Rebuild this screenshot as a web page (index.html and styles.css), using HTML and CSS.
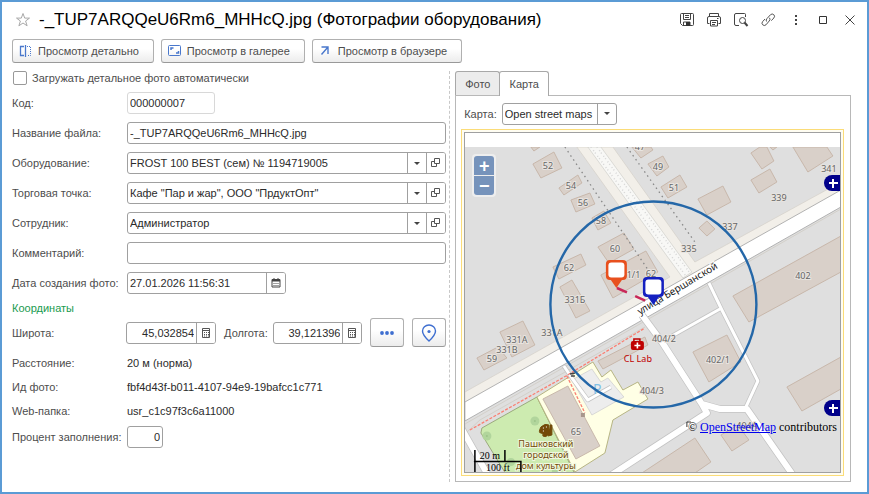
FILE: index.html
```html
<!DOCTYPE html>
<html lang="ru">
<head>
<meta charset="utf-8">
<title>Фотографии оборудования</title>
<link rel="stylesheet" href="styles.css">
</head>
<body>
<div class="window">
  <header class="titlebar">
    <button class="icon-btn star" aria-label="В избранное"><svg width="16" height="16" viewBox="0 0 16 16"><path d="M8 1.500l1.700 4.600h4.800l-3.900 2.900 1.500 4.800L8 11l-4.100 2.800 1.500-4.800-3.900-2.900h4.800z" fill="none" stroke="#a8a8a8"/></svg></button>
    <h1>-_TUP7ARQQeU6Rm6_MHHcQ.jpg (Фотографии оборудования)</h1>
    <div class="tools">
      <button class="icon-btn" aria-label="Сохранить"><svg width="16" height="16" viewBox="0 0 16 16"><path d="M.5 2.500q0-1 1-1h11q1 0 1 1v10q0 1-1 1H2.500l-2-2z" fill="none" stroke="#444"/><path d="M3.500 1.500v6h7v-6M5 3.500h4M5 5.500h4M3.500 13.500v-3.500h6.500v3.500" fill="none" stroke="#444"/><path d="M6 10h4v4H6z" fill="#333"/></svg></button>
      <button class="icon-btn" aria-label="Печать"><svg width="16" height="16" viewBox="0 0 16 16" fill="none" stroke="#444"><path d="M2.500 4.500v-3h9v3M2.500 11.500H.5v-5.500q0-1.500 1.500-1.500h10q1.500 0 1.500 1.500v5.500h-2M3.500 8.500h7v5.500h-7zM5 10.500h4M5 12.500h3M10 6.500h1.500"/></svg></button>
      <button class="icon-btn" aria-label="Просмотр"><svg width="16" height="16" viewBox="0 0 16 16" fill="none" stroke="#444"><path d="M5 13.500H2q-1.500 0-1.500-1.500V3q0-1.500 1.500-1.500h8.500q1 0 1 1V5"/><circle cx="8.500" cy="8.500" r="3"/><path d="M10.500 10.500l3 3.500" stroke-width="2"/></svg></button>
      <button class="icon-btn" aria-label="Ссылка"><svg width="16" height="16" viewBox="0 0 16 16" fill="none" stroke="#555"><path d="M5.500 9.500q-1-1.500.5-3l3.500-3.800q1.700-1.500 3.300 0t0 3.300l-2.500 2.700M8.500 5.800q1.200 1.500-.3 3.200L5 12.800q-1.700 1.500-3.300 0t0-3.300l2.300-2.500"/></svg></button>
      <button class="icon-btn" aria-label="Ещё"><svg width="16" height="16" viewBox="0 0 16 16" fill="#444"><path d="M7 3h2v2H7zM7 7h2v2H7zM7 11h2v2H7z"/></svg></button>
      <button class="icon-btn" aria-label="Развернуть"><svg width="16" height="16" viewBox="0 0 16 16"><path d="M4.500 4.500h7v7h-7z" fill="none" stroke="#333"/></svg></button>
      <button class="icon-btn" aria-label="Закрыть"><svg width="16" height="16" viewBox="0 0 16 16"><path d="M3.500 3.500l9 9M12.500 3.500l-9 9" stroke="#444"/></svg></button>
    </div>
  </header>

  <nav class="commands">
    <button class="btn"><svg width="14" height="14" viewBox="0 0 14 14" fill="none" stroke="#4a78cc"><path d="M5 2.500H1.500v9H5M6.500 1v12" stroke-width="1.300"/><path d="M8 2.500h3.500v9H8" stroke-dasharray="1 1"/></svg>Просмотр детально</button>
    <button class="btn"><svg width="14" height="14" viewBox="0 0 14 14" fill="none" stroke="#4a78cc"><rect x=".5" y="1.500" width="12" height="10" rx="1"/><path d="M3 6V4h2.500M10.500 7v2H8" stroke-width="1.500"/></svg>Просмотр в галерее</button>
    <button class="btn"><svg width="14" height="14" viewBox="0 0 14 14" fill="none" stroke="#4a78cc" stroke-width="1.400"><path d="M2.500 3H9v7M9 3l-6.500 7.500"/></svg>Просмотр в браузере</button>
  </nav>

  <main class="body">
    <form class="form">
      <label class="check"><input type="checkbox">Загружать детальное фото автоматически</label>

      <div class="rows">
        <label for="code">Код:</label>
        <div class="field code"><input id="code" value="000000007" readonly></div>

        <label for="name">Название файла:</label>
        <div class="field"><input id="name" value="-_TUP7ARQQeU6Rm6_MHHcQ.jpg"></div>

        <label for="equip">Оборудование:</label>
        <div class="field"><input id="equip" value="FROST 100 BEST (сем) № 1194719005"><button type="button" aria-label="Выбрать"><i class="caret"></i></button><button type="button" aria-label="Открыть"><svg width="10" height="10" viewBox="0 0 10 10" fill="none" stroke="#555"><path d="M3.500.5h5v5h-5zM3.500 3.500h-3v5h5v-3"/></svg></button></div>

        <label for="shop">Торговая точка:</label>
        <div class="field"><input id="shop" value="Кафе &quot;Пар и жар&quot;, ООО &quot;ПрдуктОпт&quot;"><button type="button" aria-label="Выбрать"><i class="caret"></i></button><button type="button" aria-label="Открыть"><svg width="10" height="10" viewBox="0 0 10 10" fill="none" stroke="#555"><path d="M3.500.5h5v5h-5zM3.500 3.500h-3v5h5v-3"/></svg></button></div>

        <label for="person">Сотрудник:</label>
        <div class="field"><input id="person" value="Администратор"><button type="button" aria-label="Выбрать"><i class="caret"></i></button><button type="button" aria-label="Открыть"><svg width="10" height="10" viewBox="0 0 10 10" fill="none" stroke="#555"><path d="M3.500.5h5v5h-5zM3.500 3.500h-3v5h5v-3"/></svg></button></div>

        <label for="comment">Комментарий:</label>
        <div class="field"><input id="comment" value=""></div>

        <label for="date">Дата создания фото:</label>
        <div class="field date"><input id="date" value="27.01.2026 11:56:31"><button type="button" aria-label="Календарь"><svg width="10" height="10" viewBox="0 0 10 10"><path d="M1 1.500h8v7.500H1z" fill="none" stroke="#444"/><path d="M1 1h8v2.500H1zM2.500 0h1v1h-1zM6.500 0h1v1h-1z" fill="#444"/><path d="M2.500 5.500h5M2.500 7.500h5" stroke="#444" stroke-dasharray="1 1"/></svg></button></div>
      </div>

      <h2>Координаты</h2>
      <div class="coords">
        <label class="lat-label" for="lat">Широта:</label>
        <div class="field num"><input id="lat" value="45,032854"><button type="button" aria-label="Калькулятор"><svg width="10" height="10" viewBox="0 0 10 10"><path d="M1.500.5h7v9h-7zM1.500 2.500h7" fill="none" stroke="#555"/><path d="M3 4.500h5M3 6.500h5M3 8h5" stroke="#555" stroke-dasharray="1 1"/></svg></button></div>
        <label class="lon-label" for="lon">Долгота:</label>
        <div class="field num"><input id="lon" value="39,121396"><button type="button" aria-label="Калькулятор"><svg width="10" height="10" viewBox="0 0 10 10"><path d="M1.500.5h7v9h-7zM1.500 2.500h7" fill="none" stroke="#555"/><path d="M3 4.500h5M3 6.500h5M3 8h5" stroke="#555" stroke-dasharray="1 1"/></svg></button></div>
        <button type="button" class="btn square" aria-label="Ещё"><svg width="16" height="6" viewBox="0 0 16 6" fill="#3f6fd0"><circle cx="3" cy="3" r="1.900"/><circle cx="8" cy="3" r="1.900"/><circle cx="13" cy="3" r="1.900"/></svg></button>
        <button type="button" class="btn square" aria-label="Показать на карте"><svg width="16" height="18" viewBox="0 0 16 18"><path d="M8 17Q1.500 11 1.500 7a6.500 6 0 0 1 13 0q0 4-6.500 10z" fill="none" stroke="#3f6fd0" stroke-width="1.400"/><circle cx="8" cy="7.500" r="1.600" fill="#3f6fd0"/></svg></button>
      </div>

      <dl class="facts">
        <dt>Расстояние:</dt><dd>20 м (норма)</dd>
        <dt>Ид фото:</dt><dd>fbf4d43f-b011-4107-94e9-19bafcc1c771</dd>
        <dt>Web-папка:</dt><dd>usr_c1c97f3c6a11000</dd>
      </dl>
      <div class="rows">
        <label for="fill">Процент заполнения:</label>
        <div class="field percent"><input id="fill" value="0"></div>
      </div>
    </form>

    <div class="splitter"></div>

    <section class="side">
      <div class="tabs" role="tablist">
        <button class="tab" role="tab">Фото</button>
        <button class="tab active" role="tab" aria-selected="true">Карта</button>
      </div>
      <div class="panel">
        <div class="pick">
          <label for="provider">Карта:</label>
          <div class="select"><select id="provider"><option>Open street maps</option></select><i class="caret"></i></div>
        </div>
        <div class="frame">
          <div class="map">
            <svg class="tiles" viewBox="465 147 375 325" preserveAspectRatio="xMidYMid slice">
              <rect x="455" y="140" width="400" height="345" fill="#dfdfdf"/>
              <!-- verges and unpaved lane -->
              <path d="M577 147h36L695 262 841 182v12L465 405V392L670 277z" fill="#f2efe9" stroke="#d4d0c8" stroke-width=".7"/>
              <path d="M588 147h13L692 272l-9 6z" fill="#f8f8f6" stroke="#c9c9c4" stroke-width=".6"/>
              <path d="M591 147L686 276M597 147L690 273" fill="none" stroke="#d6d6d6" stroke-width="1.500" stroke-dasharray="1 3 1 2"/>
              <!-- main street -->
              <path d="M841 190L465 402v19L841 207z" fill="#fff" stroke="#aaa" stroke-width=".9"/>
              <path d="M841 209L465 424v10l15-14 165-93" fill="none" stroke="#cfcbc4" stroke-width=".8"/>
              <!-- park, culture house grounds, car park -->
              <path d="M537 397l-55 31-1 5 25 41h69z" fill="#cdebb0" stroke="#8c9b6a" stroke-width=".8"/>
              <path d="M537 397L593 362l9 15 9-7 12 20 15-8 10 17-35 21-8 33-30 19z" fill="#ffffe5" stroke="#b0ae78" stroke-width=".9"/>
              <path d="M572 380l20-11 9 13 7-4 16 19-32 18z" fill="#ededed" stroke="#d0d0d0" stroke-width=".8"/>
              <g fill="#b1d59c"><circle cx="535" cy="421" r="4.500"/><circle cx="487" cy="436" r="4.500"/><circle cx="511" cy="462" r="4"/><circle cx="556" cy="471" r="4"/></g>
              <g fill="#9dc389"><circle cx="535" cy="421" r="1"/><circle cx="487" cy="436" r="1"/></g>
              <!-- side roads: casing, then surface -->
              <g fill="none" stroke="#c3c3c3" stroke-linejoin="round">
                <path d="M642 315l20 27 40 62 18 5h27l46 66M702 404l5 9-57 37-40 26M462 429l26 46" stroke-width="7.500"/>
                <path d="M709 283l13 27 36 71-12 26M665 340l55-31M564 366l8 12 16 22 23-13" stroke-width="4.500"/>
              </g>
              <g fill="none" stroke="#fff" stroke-linejoin="round">
                <path d="M642 315l20 27 40 62 18 5h27l46 66M702 404l5 9-57 37-40 26M462 429l26 46" stroke-width="6"/>
                <path d="M709 283l13 27 36 71-12 26M665 340l55-31M564 366l8 12 16 22 23-13" stroke-width="3"/>
              </g>
              <!-- buildings -->
              <g fill="#d9d0c9" stroke="#c5b3a6" stroke-width=".9">
                <path d="M531 147h9l-6 4z"/><path d="M533 164l21-12 8 16-21 10z"/><path d="M559 188l19-13 4 8-18 12z"/><path d="M571 200l19-7 5 11-19 8z"/><path d="M592 218l12-7 7 12-13 7z"/><path d="M598 247l26-14 10 16-25 14z"/><path d="M601 275l45-24 12 21-45 26z"/><path d="M553 267l28-13 5 11-27 14z"/><path d="M560 287l12-7 18 31-14 7z"/>
                <path d="M632 147l9 11 12-8-2-3z"/><path d="M648 164l15-8 6 11-12 9z"/><path d="M661 187l19-12 7 12-19 11z"/><path d="M698 199l25-13 8 16-24 13z"/><path d="M699 228l8-7 8 8-8 7z"/><path d="M751 180l19-11 7 13-18 11z"/><path d="M751 153l9-6h7l7 14-12 8z"/><path d="M770 147h7l-4 3z"/><path d="M793 147h34l6 9-25 16z"/>
                <path d="M733 296l108-60v36l-92 50z"/><path d="M693 352l34-17 14 27-32 20z"/><path d="M787 387l54-30v32l-39 22z"/><path d="M642 473l53-35 16 24-16 11z"/><path d="M721 435l17-10 11 15-17 11z"/>
                <path d="M477 358l21-11 9 11-23 12z"/><path d="M500 332l23-11 12 24-23 12z"/><path d="M598 361l47-24 3 8-45 24z"/><path d="M543 399l25-13 32 60-24 13z"/>
              </g>
              <path d="M565 147l84 124M627 147l68 95" fill="none" stroke="#888" stroke-dasharray="1.500 3.500" stroke-width="1.300"/>
              <path d="M470 430L566 376 645 328M567 376l18 37" fill="none" stroke="#fa7f72" stroke-width="1.300" stroke-dasharray="3 1.500"/>
              <path d="M581 413h4v4h-4z" fill="#a8978c"/><path d="M570 374l5-1M571 376h4" stroke="#444" stroke-width="1.300"/>
              <text class="parking" x="593" y="394">P</text>
              <g class="nums">
                <text x="548" y="169">52</text><text x="571" y="189">54</text><text x="583" y="206">56</text><text x="601" y="224">58</text><text x="615" y="252">60</text><text x="631" y="278">61/1</text><text x="651" y="277">62</text><text x="569" y="271">62</text><text x="575" y="303">331Б</text><text x="640" y="150">47</text>
                <text x="658" y="170">49</text><text x="674" y="191">51</text><text x="689" y="252">335</text><text x="730" y="230">337</text><text x="779" y="201">339</text><text x="829" y="172">341</text><text x="803" y="279">402</text>
                <text x="492" y="362">59</text><text x="507" y="353">331В</text><text x="517" y="343">331А</text><text x="552" y="336">331А</text><text x="664" y="342">404/2</text><text x="718" y="363">402/1</text><text x="652" y="394">404/3</text><text x="576" y="435">65</text><text x="747" y="429">404А</text>
              </g>
              <g class="place"><text x="546" y="447">Пашковский</text><text x="546" y="458">городской</text><text x="546" y="469">дом культуры</text></g>
              <path d="M541 427q4-4 8-2v9q-3 4-6 2 1-3-2-3t0-6zM550 425h2v10l-4 1" fill="#734a08" stroke="#734a08"/><path d="M543 428h1M546 427h1M543 431h1" stroke="#fff"/>
              <path d="M634 342v-3h6v3" fill="none" stroke="#bf0000" stroke-width="1.500"/><rect x="631" y="341" width="13" height="9" rx="2" fill="#bf0000"/><path d="M637.500 342.500v6M634.500 345.500h6" stroke="#fff" stroke-width="1.600"/>
              <text class="clinic" x="638" y="362">CL Lab</text>
              <text class="street" transform="translate(640 315) rotate(-31)">улица Бершанской</text>
              <circle cx="653.500" cy="304.500" r="103" fill="none" stroke="#2467a8" stroke-width="2.400"/>
              <path d="M617 288L653 304" stroke="#c8285a" stroke-width="2.500" stroke-dasharray="11 9"/>
              <path d="M610 260h13q4 0 4 4v12q0 4-4 4h-1l-5.500 8-5.500-8h-1q-4 0-4-4v-12q0-4 4-4z" fill="#e8501e"/><rect x="608.500" y="262.500" width="16" height="15" rx="3" fill="#fff"/>
              <path d="M647 277h13q4 0 4 4v12q0 4-4 4h-1l-5.500 8-5.500-8h-1q-4 0-4-4v-12q0-4 4-4z" fill="#1420c0"/><rect x="645.500" y="279.500" width="16" height="15" rx="3" fill="#fff"/>
              <!-- scale bar -->
              <path d="M475 450v22M505 450v12M474 461.500h47v10.500" fill="none" stroke="#000" stroke-width="1.500"/>
              <g class="scale"><text x="490" y="459">20 m</text><text x="498" y="471">100 ft</text></g>
              <path d="M687 427v-5h4" fill="none" stroke="#333"/>
            </svg>
            <div class="zoom"><button aria-label="Приблизить">+</button><button aria-label="Отдалить">−</button></div>
            <button class="expand layers" aria-label="Слои"></button>
            <button class="expand overview" aria-label="Обзор"></button>
            <p class="credit">© <a href="#">OpenStreetMap</a> contributors</p>
          </div>
        </div>
      </div>
    </section>
  </main>
</div>
</body>
</html>
```
FILE: styles.css
```css
* { box-sizing: border-box; }

body {
  margin: 0;
  font: 11px/14px "Liberation Sans", Arial, sans-serif;
  color: #4d4d4d;
}

button, input, select { font: inherit; color: inherit; }
button { cursor: pointer; }

.window {
  display: flex;
  flex-direction: column;
  min-height: 100vh;
  padding: 5px 8px 10px 10px;
  border: 2px solid #5b9bd5;
  background: #fff;
}

.titlebar { display: flex; align-items: center; height: 26px; }
.titlebar h1 {
  flex: 1;
  min-width: 0;
  margin: 0 0 0 8px;
  font-size: 17px;
  line-height: 20px;
  font-weight: normal;
  color: #000;
  white-space: nowrap;
}
.icon-btn {
  display: flex;
  padding: 0;
  border: 0;
  background: none;
}
.star { margin-left: 3px; }
.tools { display: flex; gap: 11px; padding-right: 1px; }

.commands { display: flex; gap: 7px; margin-top: 6px; }
.btn {
  display: flex;
  align-items: center;
  gap: 5px;
  height: 24px;
  padding: 0 14px 0 6px;
  border: 1px solid #b0b0b0;
  border-bottom-color: #999;
  border-radius: 3px;
  background: linear-gradient(#fff 40%, #ececec);
  white-space: nowrap;
}

.body {
  flex: 1;
  display: grid;
  grid-template-columns: minmax(0, 12fr) 1px minmax(0, 11fr);
  margin: 8px 8px 0 0;
}
.splitter { border-left: 1px dashed #c8c8c8; }

.form { padding-right: 3px; }
.check { display: flex; align-items: center; gap: 5px; height: 14px; }
.check input {
  appearance: none;
  width: 14px;
  height: 14px;
  margin: 0 0 0 1px;
  border: 1px solid #999;
  border-radius: 2px;
}
.rows {
  display: grid;
  grid-template-columns: 115px minmax(0, 1fr);
  grid-auto-rows: 22px;
  row-gap: 8px;
  align-items: center;
}
.check + .rows { margin-top: 7px; }

.field {
  display: flex;
  height: 22px;
  border: 1px solid #a0a0a0;
  border-radius: 3px;
  background: #fff;
  overflow: hidden;
}
.field input {
  flex: 1;
  min-width: 0;
  padding: 0 2px;
  border: 0;
  outline: 0;
  background: none;
  color: #2b2b2b;
}
.field button {
  display: flex;
  align-items: center;
  justify-content: center;
  width: 19px;
  padding: 0;
  border: 0;
  border-left: 1px solid #a0a0a0;
  background: #fff;
}
.field.code { width: 88px; border-color: #d8d8d8; }
.field.date { width: 159px; }
.field.num { width: 90px; }
.field.percent { width: 36px; }
.num input, .percent input { text-align: right; }

.caret {
  border: 3px solid transparent;
  border-top-color: #444;
  border-bottom: 0;
}

h2 {
  margin: 7px 0 3px;
  font-size: 11px;
  line-height: 14px;
  font-weight: normal;
  color: #1a9b50;
}
.coords { display: flex; align-items: center; height: 29px; }
.lat-label { width: 115px; }
.lon-label { width: 49px; margin-left: 8px; }
.square { justify-content: center; width: 34px; height: 29px; margin-left: 8px; padding: 0; }

.facts {
  display: grid;
  grid-template-columns: 115px minmax(0, 1fr);
  grid-auto-rows: 24px;
  align-items: center;
  margin: 4px 0 3px;
}
.facts dd { margin: 0; color: #2b2b2b; }

.side { display: flex; flex-direction: column; padding-left: 5px; }
.tabs { display: flex; height: 24px; }
.tab {
  padding: 0 9px;
  border: 1px solid #a8a8a8;
  border-bottom: 0;
  border-radius: 3px 3px 0 0;
  background: #ececec;
}
.tab.active {
  position: relative;
  height: 25px;
  margin-left: -1px;
  background: #fff;
}
.panel {
  flex: 1;
  display: flex;
  flex-direction: column;
  padding: 7px 6px 5px 5px;
  border: 1px solid #b8b8b8;
}
.pick { display: flex; align-items: center; gap: 5px; padding-left: 3px; }
.select {
  position: relative;
  width: 115px;
  height: 22px;
  border: 1px solid #a0a0a0;
  border-radius: 3px;
}
.select select {
  appearance: none;
  width: 100%;
  height: 20px;
  padding: 0 18px 0 2px;
  border: 0;
  background: linear-gradient(#a0a0a0, #a0a0a0) right 18px top / 1px 100% no-repeat;
  color: #2b2b2b;
}
.select .caret { position: absolute; right: 6px; top: 8px; pointer-events: none; }

.frame {
  flex: 1;
  display: flex;
  margin-top: 4px;
  padding: 2px;
  border: 1px solid #fbdc78;
  background: #fffdf2;
}
.map {
  position: relative;
  flex: 1;
  min-width: 0;
  padding-top: 14px;
  border: 1px solid #a0a0a0;
  background: #fff;
  overflow: hidden;
}
.tiles { display: block; width: 100%; height: 100%; }
.tiles text { font-family: "Noto Sans", sans-serif; }
.nums text {
  font-size: 9px;
  text-anchor: middle;
  fill: #666;
  stroke: #e8e4e0;
  stroke-width: 2px;
  paint-order: stroke;
}
.place text {
  font-size: 9px;
  text-anchor: middle;
  fill: #734a08;
  stroke: #f0f8e0;
  stroke-width: 2px;
  paint-order: stroke;
}
.tiles .parking { font-size: 14px; fill: #7fc0e6; }
.tiles .clinic { font-size: 9px; text-anchor: middle; fill: #bf0000; }
.tiles .street { font-size: 10px; fill: #222; stroke: #fff; stroke-width: 2px; paint-order: stroke; }
.tiles .scale text { font: 10px "Liberation Serif", serif; text-anchor: middle; fill: #000; }

.zoom {
  position: absolute;
  left: 7px;
  top: 21px;
  display: grid;
  gap: 1px;
  padding: 2px;
  border-radius: 4px;
  background: #eee;
}
.zoom button {
  width: 20px;
  height: 19px;
  padding: 0;
  border: 0;
  border-radius: 3px 3px 0 0;
  background: #7693bb;
  color: #fff;
  font-size: 18px;
  line-height: 18px;
  font-weight: bold;
}
.zoom button + button { border-radius: 0 0 3px 3px; }

.expand {
  position: absolute;
  right: 0;
  width: 16px;
  height: 16px;
  padding: 0;
  border: 0;
  border-radius: 8px 0 0 8px;
  background:
    linear-gradient(#fff, #fff) 5px 7px / 9px 2px no-repeat,
    linear-gradient(#fff, #fff) 8px 4px / 2px 9px no-repeat,
    #00008b;
}
.layers { top: 42px; }
.overview { bottom: 56px; }

.credit {
  position: absolute;
  right: 3px;
  bottom: 38px;
  margin: 0;
  font: 12px/14px "Liberation Serif", serif;
  color: #000;
}
.credit a { color: #00e; }
```
